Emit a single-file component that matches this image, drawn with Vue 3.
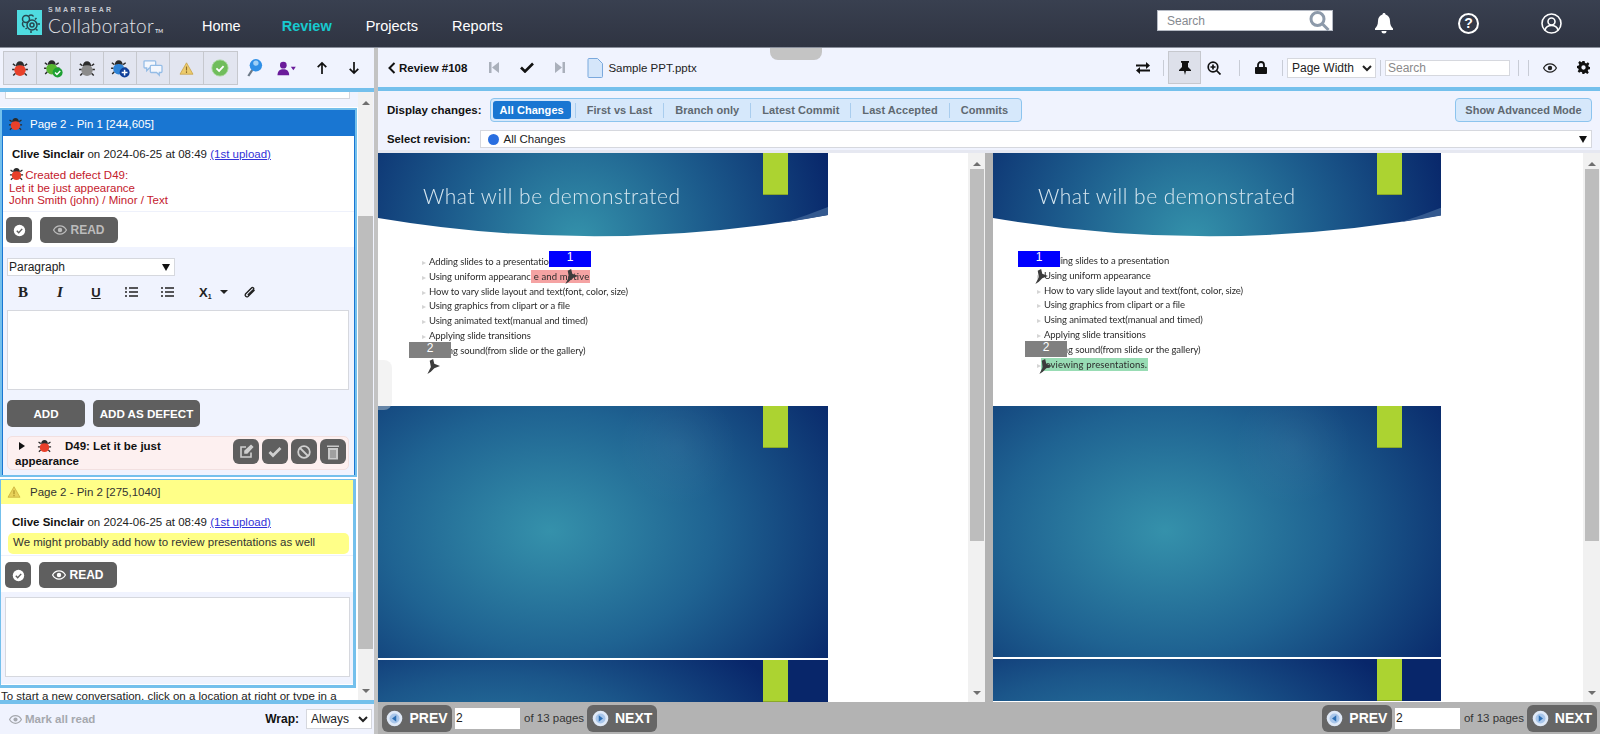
<template>
  <div class="app">
    <!-- shared icons -->
    <svg class="sprite" width="0" height="0">
      <symbol id="bug" viewBox="0 0 24 24">
        <path d="M6 9 2.500 6.500M18 9l3.500-2.500M5 14H1.500M19 14h3.500M6 19l-3 3M18 19l3 3" stroke="#2b2b2b" stroke-width="2" fill="none" />
        <ellipse cx="12" cy="15" rx="7.500" ry="7.500" fill="currentColor" />
        <path d="M6.500 9.500C6.500 5.500 9 3 12 3s5.500 2.500 5.500 6.500c-3.500-1.500-7.500-1.500-11 0Z" fill="#2b2b2b" />
      </symbol>
      <symbol id="eye" viewBox="0 0 24 24">
        <path d="M1 12s4-7 11-7 11 7 11 7-4 7-11 7S1 12 1 12Z" fill="none" stroke="currentColor" stroke-width="2.200" />
        <circle cx="12" cy="12" r="3.800" fill="currentColor" />
      </symbol>
      <symbol id="check-circle" viewBox="0 0 24 24">
        <circle cx="12" cy="12" r="10.500" fill="#fff" />
        <path d="m7 12.500 3.500 3.500L17 9" fill="none" stroke="#5f5f5f" stroke-width="2.600" />
      </symbol>
      <symbol id="page-arrow" viewBox="0 0 24 24">
        <circle cx="12" cy="12" r="11" fill="#dfe9f7" />
        <circle cx="12" cy="12" r="7" fill="#a9c6ea" />
        <path d="M14.500 7.500v9L8.500 12Z" fill="#2c6fb5" />
      </symbol>
    </svg>

    <header class="topbar">
      <div class="logo">
        <div class="logo-mark">
          <svg width="25" height="25" viewBox="0 0 25 25" fill="none" stroke="#27474f" stroke-width="1.500">
            <circle cx="15" cy="15" r="5" />
            <circle cx="15" cy="15" r="2" />
            <circle cx="9" cy="9" r="3.500" />
            <path d="M11.500 6.500c1-2 4-2 5 0M6 12c-1 2-.5 4 1.500 5M18 9.500l1.500-1.500M20.500 14H23M19 19l1.500 1.500M14 20.500V23M10 18l-1.500 1" />
          </svg>
        </div>
        <div class="logo-text">
          <div class="logo-small">SMARTBEAR</div>
          <div class="logo-big">Collaborator<span class="logo-tm">TM</span></div>
        </div>
      </div>
      <nav class="nav">
        <a v-for="item in navItems" :key="item" class="nav-link" :class="{ active: item === 'Review' }">{{ item }}</a>
      </nav>
      <div class="top-right">
        <div class="top-search">
          <span>Search</span>
          <svg width="22" height="22" viewBox="0 0 22 22" fill="none" stroke="#8d9aaa" stroke-width="3">
            <circle cx="9.500" cy="9" r="6.500" />
            <path d="m14.500 14 6 6" />
          </svg>
        </div>
        <svg class="top-bell" width="20" height="22" viewBox="0 0 20 22" fill="#fff">
          <path d="M10 1c-1 0-1.500.7-1.500 1.500C5.500 3.300 4 6 4 9c0 4-1.500 6-3 7.500V18h18v-1.500C17.500 15 16 13 16 9c0-3-1.500-5.700-4.500-6.500C11.500 1.700 11 1 10 1ZM7.500 19a2.500 2.500 0 0 0 5 0Z" />
        </svg>
        <div class="top-help">?</div>
        <svg class="top-user" width="21" height="21" viewBox="0 0 21 21" fill="none" stroke="#fff" stroke-width="1.600">
          <circle cx="10.500" cy="10.500" r="9.500" />
          <circle cx="10.500" cy="8.500" r="3.500" />
          <path d="M4 17c1-3.500 3.500-4.500 6.500-4.500S16 13.500 17 17" />
        </svg>
      </div>
    </header>

    <main class="workspace">
      <!-- left column with conversations -->
      <aside class="side">
        <div class="side-tools">
          <div class="tool-group">
            <button class="tool"><svg width="18" height="18" class="red"><use href="#bug" /></svg></button>
            <button class="tool">
              <svg width="20" height="20" viewBox="0 0 24 24" class="green">
                <use href="#bug" width="21" height="21" />
                <circle cx="17.500" cy="17.500" r="6" fill="#1da033" />
                <path d="m14.500 17.500 2.200 2.200 4-4" fill="none" stroke="#fff" stroke-width="1.800" />
              </svg>
            </button>
            <button class="tool"><svg width="18" height="18" class="grey"><use href="#bug" /></svg></button>
            <button class="tool">
              <svg width="20" height="20" viewBox="0 0 24 24" class="blue">
                <use href="#bug" width="21" height="21" />
                <circle cx="17.500" cy="17.500" r="6" fill="#0f3f9a" />
                <path d="M14 17.500h7M17.500 14v7" stroke="#fff" stroke-width="1.800" />
              </svg>
            </button>
            <button class="tool">
              <svg width="20" height="18" viewBox="0 0 22 20" fill="#f4f7fd" stroke="#94bce6" stroke-width="1.400">
                <path d="M2 2h11a1 1 0 0 1 1 1v6a1 1 0 0 1-1 1H7l-3 3v-3H2a1 1 0 0 1-1-1V3a1 1 0 0 1 1-1Z" />
                <path d="M9 7h11a1 1 0 0 1 1 1v6a1 1 0 0 1-1 1h-2v3l-3-3H9a1 1 0 0 1-1-1V8a1 1 0 0 1 1-1Z" />
              </svg>
            </button>
            <button class="tool">
              <svg width="15" height="13" viewBox="0 0 18 16"><path d="M9 1 17 15H1Z" fill="#eccb6c" stroke="#c9a24a" /><path d="M9 5.500v5M9 11.500v2" stroke="#8d6c2a" stroke-width="1.400" /></svg>
            </button>
            <button class="tool">
              <svg width="18" height="18" viewBox="0 0 20 20"><circle cx="10" cy="10" r="9" fill="#70bd5c" stroke="#a5d69a" /><path d="m6 10.500 3 2.800 5-5.300" fill="none" stroke="#fff" stroke-width="2" /></svg>
            </button>
          </div>
          <svg class="side-icon" width="16" height="20" viewBox="0 0 18 22">
            <path d="m6 13-4.500 7" stroke="#6d7a88" stroke-width="2.500" />
            <circle cx="10" cy="8" r="7" fill="#2f8fe6" />
            <circle cx="10" cy="5.500" r="3" fill="#9fd0f7" />
          </svg>
          <svg class="side-icon icon-user" width="21" height="15" viewBox="0 0 24 18" fill="#6a1b9a">
            <circle cx="7" cy="5" r="4" />
            <path d="M0 17c0-5 3-7 7-7s7 2 7 7Z" />
            <path d="m16 7 6 0-3 4Z" />
          </svg>
          <svg class="side-arrow" width="12" height="14" viewBox="0 0 14 16" fill="none" stroke="#111" stroke-width="2"><path d="M7 15V2M2 7l5-5 5 5" /></svg>
          <svg class="side-arrow" width="12" height="14" viewBox="0 0 14 16" fill="none" stroke="#111" stroke-width="2"><path d="M7 1v13M2 9l5 5 5-5" /></svg>
        </div>
        <div class="stripe"></div>

        <div class="side-body">
          <div class="threads">
            <div class="thread-tail"><div class="tail-box"></div></div>

            <section class="card card-active">
              <div class="card-head head-blue">
                <svg width="15" height="15" class="red"><use href="#bug" /></svg>
                <span>Page 2 - Pin 1 [244,605]</span>
              </div>
              <div class="card-msg">
                <div class="msg-meta"><b>Clive Sinclair</b> on 2024-06-25 at 08:49 <a class="upload">(1st upload)</a></div>
                <div class="msg-defect">
                  <svg width="15" height="15" class="red"><use href="#bug" /></svg>
                  Created defect D49:<br />Let it be just appearance<br />John Smith (john) / Minor / Text
                </div>
              </div>
              <div class="card-actions">
                <button class="btn btn-icon"><svg width="13" height="13"><use href="#check-circle" /></svg></button>
                <button class="btn btn-read is-read"><svg width="14" height="14"><use href="#eye" /></svg>READ</button>
              </div>
              <div class="editor">
                <div class="para-select"><span>Paragraph</span><i class="tri"></i></div>
                <div class="format-bar">
                  <b class="fmt fmt-b">B</b>
                  <i class="fmt fmt-i">I</i>
                  <u class="fmt fmt-u">U</u>
                  <svg class="fmt-svg" width="13" height="12" viewBox="0 0 13 12" stroke="#222" stroke-width="1.500"><path d="M4 2h9M4 6h9M4 10h9M1 1v2.500M1 5v2M1 9v2" /></svg>
                  <svg class="fmt-svg" width="13" height="12" viewBox="0 0 13 12" stroke="#222" stroke-width="1.500"><path d="M4 2h9M4 6h9M4 10h9M0 2h2M0 6h2M0 10h2" /></svg>
                  <span class="fmt-sub">X<sub>1</sub></span>
                  <i class="mini-tri"></i>
                  <svg class="fmt-clip" width="13" height="13" viewBox="0 0 13 13" fill="none" stroke="#222" stroke-width="1.400"><path d="M11.500 4 5 10.500a1.800 1.800 0 0 1-2.500-2.500l6-6a1.200 1.200 0 0 1 2 1.500L4.800 9" /></svg>
                </div>
                <div class="textbox textbox-1"></div>
                <div class="editor-btns">
                  <button class="btn btn-add">ADD</button>
                  <button class="btn btn-defect">ADD AS DEFECT</button>
                </div>
                <div class="defect-row">
                  <div class="defect-text">
                    <i class="expand"></i>
                    <svg width="15" height="15" class="red"><use href="#bug" /></svg>
                    <b class="defect-title">D49: Let it be just appearance</b>
                  </div>
                  <div class="defect-btns">
                    <button class="btn btn-mini">
                      <svg width="15" height="15" viewBox="0 0 15 15" fill="none" stroke="#cfcfcf" stroke-width="1.600"><path d="M12 8.500V13H2V3h5" /><path d="M6 7 12 1.500l1.500 1.500L8 9H6Z" fill="#cfcfcf" /></svg>
                    </button>
                    <button class="btn btn-mini">
                      <svg width="14" height="12" viewBox="0 0 14 12" fill="none" stroke="#cfcfcf" stroke-width="2.800"><path d="m1.500 6 3.500 3.500L12.500 2" /></svg>
                    </button>
                    <button class="btn btn-mini">
                      <svg width="14" height="14" viewBox="0 0 14 14" fill="none" stroke="#cfcfcf" stroke-width="1.800"><circle cx="7" cy="7" r="5.800" /><path d="m3 3 8 8" /></svg>
                    </button>
                    <button class="btn btn-mini">
                      <svg width="14" height="16" viewBox="0 0 14 16" fill="#c9c9c9"><path d="M1 1.500h12V3H1ZM2 4h10v11.500H2Z" /><path d="M5 6v8M7 6v8M9 6v8" stroke="#777" /></svg>
                    </button>
                  </div>
                </div>
              </div>
            </section>

            <section class="card card-open">
              <div class="card-head head-yellow">
                <svg width="14" height="12" viewBox="0 0 18 16"><path d="M9 1 17 15H1Z" fill="#e8d25a" stroke="#c9ad3a" /><path d="M9 5.500v5M9 11.500v2" stroke="#a58a22" stroke-width="1.400" /></svg>
                <span>Page 2 - Pin 2 [275,1040]</span>
              </div>
              <div class="card-msg msg-yellow">
                <div class="msg-meta"><b>Clive Sinclair</b> on 2024-06-25 at 08:49 <a class="upload">(1st upload)</a></div>
                <div class="msg-note">We might probably add how to review presentations as well</div>
              </div>
              <div class="card-actions actions-2">
                <button class="btn btn-icon"><svg width="13" height="13"><use href="#check-circle" /></svg></button>
                <button class="btn btn-read"><svg width="14" height="14"><use href="#eye" /></svg>READ</button>
              </div>
              <div class="editor editor-2">
                <div class="textbox textbox-2"></div>
              </div>
            </section>

            <p class="hint">To start a new conversation, click on a location at right or type in a</p>
          </div>

          <div class="scrollbar scroll-side">
            <i class="arrow-up"></i>
            <div class="thumb-space"><div class="thumb"></div></div>
            <i class="arrow-down"></i>
          </div>
        </div>

        <div class="stripe"></div>
        <div class="side-foot">
          <span class="mark-read"><svg width="13" height="13"><use href="#eye" /></svg>Mark all read</span>
          <label class="wrap-label">Wrap:</label>
          <select class="wrap-select"><option>Always</option></select>
        </div>
      </aside>

      <!-- right column with the diff viewer -->
      <div class="viewer">
        <div class="view-tools">
          <div class="collapse-tab"></div>
          <div class="crumb">
            <svg width="8" height="12" viewBox="0 0 8 12" fill="none" stroke="#111" stroke-width="2"><path d="M6.500 1 1.500 6l5 5" /></svg>
            <b>Review #108</b>
          </div>
          <div class="doc-nav">
            <svg width="10" height="11" viewBox="0 0 10 11" fill="#aab0bb"><path d="M0 0h2.500v11H0ZM10 0v11L3 5.500Z" /></svg>
            <svg width="14" height="11" viewBox="0 0 14 11" fill="none" stroke="#111" stroke-width="2.600"><path d="m1 5.500 4 4L13 1.500" /></svg>
            <svg width="10" height="11" viewBox="0 0 10 11" fill="#aab0bb"><path d="M10 0H7.500v11H10ZM0 0v11l7-5.500Z" /></svg>
          </div>
          <div class="file-name">
            <svg width="16" height="20" viewBox="0 0 16 20" fill="#d5e6fa" stroke="#7ba9dd"><path d="M1 1.500a1 1 0 0 1 1-1h8.500l5 5V18.500a1 1 0 0 1-1 1H2a1 1 0 0 1-1-1Z" /></svg>
            <span>Sample PPT.pptx</span>
          </div>
          <div class="view-right">
            <svg class="vt vt-swap" width="14" height="12" viewBox="0 0 14 12" fill="#111"><path d="M0 2.500h10V0l4 3.500L10 7V4.500H0ZM14 7.500H4V5L0 8.500 4 12V9.500h10Z" /></svg>
            <i class="vsep"></i>
            <div class="pin-btn">
              <svg width="12" height="14" viewBox="0 0 12 14" fill="#111"><path d="M2 0h8v1.500L9 2v4l3 3v1H7l-1 4-1-4H0V9l3-3V2l-1-.5Z" /></svg>
            </div>
            <svg class="vt vt-zoom" width="14" height="14" viewBox="0 0 14 14" fill="none" stroke="#111" stroke-width="1.700"><circle cx="6" cy="6" r="4.800" /><path d="m9.500 9.500 4 4M3.500 6h5M6 3.500v5" /></svg>
            <i class="vsep sep-a"></i>
            <svg class="vt vt-lock" width="12" height="13" viewBox="0 0 12 13" fill="#111"><path d="M1 6h10a1 1 0 0 1 1 1v5a1 1 0 0 1-1 1H1a1 1 0 0 1-1-1V7a1 1 0 0 1 1-1Z" /><path d="M3 6V4a3 3 0 0 1 6 0v2" fill="none" stroke="#111" stroke-width="1.800" /></svg>
            <i class="vsep sep-b"></i>
            <select class="page-select"><option>Page Width</option></select>
            <i class="vsep sep-c"></i>
            <input class="view-search" placeholder="Search" />
            <i class="vsep sep-d"></i>
            <i class="vsep sep-e"></i>
            <svg class="vt vt-eye" width="14" height="14"><use href="#eye" /></svg>
            <svg class="vt vt-gear" width="13" height="13" viewBox="0 0 24 24" fill="#111"><path d="M10 0h4l.7 3.400 2.300 1 3-2 2.800 2.800-2 3 1 2.300L24 11v4l-3.200.7-1 2.300 2 3-2.800 2.800-3-2-2.300 1L14 24h-4l-.7-3.200-2.300-1-3 2L1.200 19l2-3-1-2.300L0 13V9l3.200-.7 1-2.300-2-3L5 .2l3 2 1.300-.5ZM12 8a4 4 0 1 0 0 8 4 4 0 0 0 0-8Z" fill-rule="evenodd" /></svg>
          </div>
        </div>
        <div class="stripe"></div>

        <div class="filters">
          <div class="filter-row">
            <b class="filter-label">Display changes:</b>
            <div class="tabs">
              <span v-for="tab in tabs" :key="tab" class="tab" :class="{ 'tab-on': tab === 'All Changes' }">{{ tab }}</span>
            </div>
            <button class="advanced">Show Advanced Mode</button>
          </div>
          <div class="filter-row row-rev">
            <b class="filter-label label-rev">Select revision:</b>
            <div class="rev-select"><i class="rev-dot"></i><span>All Changes</span><i class="tri"></i></div>
          </div>
        </div>

        <div class="docs">
          <div v-for="pane in panes" :key="pane.id" class="doc-pane" :class="pane.id">
            <div class="doc-scroll">
              <div class="slide slide-first">
                <div class="slide-head">
                  <svg class="head-art" width="450" height="90" viewBox="0 0 450 90">
                    <defs>
                      <radialGradient :id="pane.id + '-grad'" gradientUnits="userSpaceOnUse" cx="200" cy="88" r="265">
                        <stop offset="0" stop-color="#3492ab" />
                        <stop offset="0.5" stop-color="#1c5b8c" />
                        <stop offset="1" stop-color="#08266a" />
                      </radialGradient>
                    </defs>
                    <path d="M0 0H450V62Q225 103 0 65Z" :fill="'url(#' + pane.id + '-grad)'" />
                    <path d="M408 69Q430 62 450 54V62Q430 66 408 69Z" fill="#34598f" />
                  </svg>
                  <div class="slide-title">What will be demonstrated</div>
                  <div class="green-tab"></div>
                </div>
                <ul class="slide-lines">
                  <li v-for="(line, i) in pane.lines" :key="i">
                    {{ line.text }}<mark v-if="line.mark" :class="pane.id + '-mark'">{{ line.mark }}</mark>
                  </li>
                </ul>
              </div>
              <div class="slide slide-blue" :style="{ height: pane.midHeight + 'px' }"><div class="green-tab"></div></div>
              <div class="slide slide-blue slide-last"><div class="green-tab"></div></div>

              <div
                v-for="pin in pane.pins"
                :key="pin.label"
                class="pin-label"
                :class="'pin-' + pin.label"
                :style="{ left: pin.x + 'px', top: pin.y + 'px' }"
              >{{ pin.label }}</div>
              <svg
                v-for="(tack, t) in pane.tacks"
                :key="t"
                class="tack"
                width="16"
                height="15"
                viewBox="0 0 14 13"
                :style="{ left: tack.x + 'px', top: tack.y + 'px' }"
              >
                <path d="M3 13 6 7 5 1.500 8 0l1 4 5 2-5 2-3 3Z" fill="#3c3c3c" />
              </svg>
            </div>
            <div class="scrollbar scroll-doc">
              <i class="arrow-up"></i>
              <div class="thumb-space"><div class="thumb"></div></div>
              <i class="arrow-down"></i>
            </div>
            <div v-if="pane.id === 'pane-left'" class="side-handle"></div>
          </div>
        </div>

        <div class="pager">
          <div v-for="n in 2" :key="n" class="pager-side">
            <button class="page-btn">
              <svg width="17" height="17"><use href="#page-arrow" /></svg>PREV
            </button>
            <input class="page-input" value="2" />
            <span class="page-count">of 13 pages</span>
            <button class="page-btn">
              <svg class="flip" width="17" height="17"><use href="#page-arrow" /></svg>NEXT
            </button>
          </div>
        </div>
      </div>
    </main>
  </div>
</template>

<script setup>
const navItems = ['Home', 'Review', 'Projects', 'Reports']
const tabs = ['All Changes', 'First vs Last', 'Branch only', 'Latest Commit', 'Last Accepted', 'Commits']

const sharedLines = [
  { text: 'How to vary slide layout and text(font, color, size)' },
  { text: 'Using graphics from clipart or a file' },
  { text: 'Using animated text(manual and timed)' },
  { text: 'Applying slide transitions' },
  { text: 'Adding sound(from slide or the gallery)' }
]

const panes = [
  {
    id: 'pane-left',
    midHeight: 252,
    lines: [
      { text: 'Adding slides to a presentation' },
      { text: 'Using uniform appearanc', mark: 'e and motive' },
      ...sharedLines
    ],
    pins: [
      { label: 1, x: 171, y: 98 },
      { label: 2, x: 31, y: 189 }
    ],
    tacks: [
      { x: 184, y: 116 },
      { x: 46, y: 206 }
    ]
  },
  {
    id: 'pane-right',
    midHeight: 251,
    lines: [
      { text: 'Adding slides to a presentation' },
      { text: 'Using uniform appearance' },
      ...sharedLines,
      { text: '', mark: 'reviewing presentations.' }
    ],
    pins: [
      { label: 1, x: 25, y: 98 },
      { label: 2, x: 32, y: 188 }
    ],
    tacks: [
      { x: 39, y: 116 },
      { x: 43, y: 206 }
    ]
  }
]
</script>

<style scoped>
.app {
  width: 100%;
  height: 734px;
  display: flex;
  flex-direction: column;
  overflow: hidden;
  font-family: "Liberation Sans", Arial, sans-serif;
  font-size: 11.500px;
  color: #222;
  background: #f0f3fe;
}

.sprite {
  position: absolute;
}

button {
  font-family: inherit;
  border: 0;
  padding: 0;
}

/* Top bar */
.topbar {
  height: 48px;
  flex: none;
  display: flex;
  align-items: center;
  background: linear-gradient(#394050, #2f3442);
  border-bottom: 1px solid #8a8f9b;
  box-sizing: border-box;
}

.logo {
  width: 144px;
  flex: none;
  display: flex;
  align-items: center;
  margin-left: 17px;
}

.logo-mark {
  width: 25px;
  height: 25px;
  flex: none;
  background: #4fdbe0;
  margin-bottom: 2px;
}

.logo-text {
  margin-left: 6px;
  color: #e4e6ea;
  white-space: nowrap;
}

.logo-small {
  font-size: 7px;
  font-weight: bold;
  letter-spacing: 2.300px;
  line-height: 8px;
  color: #c4c8d0;
}

.logo-big {
  font-family: Lato, sans-serif;
  font-weight: 300;
  font-size: 19px;
  line-height: 20px;
  letter-spacing: 0.400px;
  margin-top: 2px;
}

.logo-tm {
  font-size: 5px;
  font-weight: 700;
  letter-spacing: 0;
  margin-left: 1px;
}

.nav {
  display: flex;
  margin-left: 41px;
  margin-top: 4px;
}

.nav-link {
  font-size: 14.500px;
  color: #fff;
  margin-right: 34px;
}

.nav-link.active {
  color: #17c9cf;
  font-weight: bold;
  margin-left: 7px;
}

.top-right {
  margin-left: auto;
  display: flex;
  align-items: center;
}

.top-search {
  width: 176px;
  height: 21px;
  box-sizing: border-box;
  display: flex;
  align-items: center;
  justify-content: space-between;
  padding: 0 2px 0 9px;
  background: #fff;
  border: 1px solid #b5bac4;
  font-size: 12px;
  color: #85898f;
  margin-bottom: 6px;
}

.top-bell {
  margin-left: 41px;
  margin-bottom: 2px;
}

.top-help {
  width: 17px;
  height: 17px;
  margin-left: 64px;
  border: 2px solid #fff;
  border-radius: 50%;
  color: #fff;
  font-size: 14px;
  font-weight: bold;
  line-height: 17px;
  text-align: center;
}

.top-user {
  margin-left: 62px;
  margin-right: 38px;
}

/* Workspace */
.workspace {
  flex: 1;
  display: flex;
  min-height: 0;
}

.side {
  width: 378px;
  flex: none;
  box-sizing: border-box;
  border-right: 4px solid #c3c3c3;
  display: flex;
  flex-direction: column;
  background: #f0f3fe;
}

.stripe {
  height: 4px;
  flex: none;
  background: #74c0ec;
}

.side-tools {
  height: 40px;
  flex: none;
  display: flex;
  align-items: center;
  padding: 0 3px;
  box-sizing: border-box;
}

.tool-group {
  display: flex;
  border: 1px solid #c6c8ce;
}

.tool {
  width: 33.300px;
  height: 32px;
  display: flex;
  align-items: center;
  justify-content: center;
  background: #e2e5f0;
  border-right: 1px solid #c6c8ce;
}

.tool:last-child {
  border-right: 0;
}

.red { color: #e8402a; }
.green { color: #55b52f; }
.grey { color: #8b8b8b; }
.blue { color: #2e83d6; }

.side-icon {
  margin-left: 9px;
}

.icon-user {
  margin-left: 14px;
}

.side-arrow {
  margin-left: 18px;
}

.side-arrow + .side-arrow {
  margin-left: 20px;
}

.side-body {
  flex: 1;
  min-height: 0;
  display: flex;
}

.threads {
  width: 358px;
  flex: none;
  overflow: hidden;
  background: #fff;
}

.thread-tail {
  height: 15px;
  box-sizing: border-box;
  padding: 0 8px 8px 5px;
  background: #f0f3fe;
}

.tail-box {
  height: 7px;
  background: #fff;
  border: 1px solid #d4d6dc;
  border-top: 0;
  box-sizing: border-box;
}

.card {
  box-sizing: border-box;
  width: 358px;
  background: #fff;
}

.card-active {
  border: 2px solid #1976d2;
  outline: 2px solid #74c0ec;
  outline-offset: -1px;
  width: 355px;
  margin-left: 1px;
  height: 367px;
  margin-top: 2px;
}

.card-open {
  margin-top: 3px;
  width: 356px;
  border: 1px solid #74c0ec;
  border-bottom-width: 3px;
  border-right-width: 3px;
  height: 209px;
}

.card-head {
  display: flex;
  align-items: center;
  gap: 7px;
  padding-left: 5px;
}

.head-blue {
  height: 25px;
  background: #1976d2;
  color: #fff;
}

.head-yellow {
  height: 24px;
  background: #ffff88;
  color: #333;
  gap: 9px;
  padding-left: 6px;
}

.card-msg {
  height: 76px;
  box-sizing: border-box;
  padding: 12px 0 0 9px;
  border-bottom: 1px solid #eef1fb;
}

.msg-meta b {
  color: #111;
}

.upload {
  color: #3232d8;
  text-decoration: underline;
}

.msg-defect {
  margin: 6px 0 0 -3px;
  color: #c4202c;
  line-height: 12.600px;
}

.msg-defect svg {
  vertical-align: -2px;
  margin-right: -2px;
}

.msg-yellow {
  height: 52px;
  padding-left: 11px;
}

.msg-note {
  margin: 5px 4px 0 -4px;
  height: 21px;
  box-sizing: border-box;
  padding: 3px 5px;
  background: #ffff88;
  border-radius: 5px;
  color: #333;
}

.card-actions {
  height: 35px;
  box-sizing: border-box;
  display: flex;
  align-items: flex-start;
  gap: 8px;
  padding: 5px 0 0 3px;
}

.actions-2 {
  height: 36px;
  padding-top: 6px;
  padding-left: 4px;
}

.btn {
  background: #5f5f5f;
  color: #fff;
  border-radius: 5px;
  font-size: 11.600px;
  font-weight: bold;
  white-space: nowrap;
  display: flex;
  align-items: center;
  justify-content: center;
}

.btn-icon {
  width: 26px;
  height: 26px;
}

.btn-read {
  width: 78px;
  height: 26px;
  font-size: 12px;
  gap: 3px;
}

.btn-read.is-read {
  color: #bcbcbc;
}

.editor {
  background: #f0f3fe;
  padding: 11px 4px 0;
  height: 228px;
  box-sizing: border-box;
}

.editor-2 {
  height: 92px;
  padding-top: 5px;
  padding-left: 4px;
}

.para-select {
  width: 168px;
  height: 18px;
  box-sizing: border-box;
  display: flex;
  align-items: center;
  justify-content: space-between;
  padding: 0 4px 0 1px;
  background: #fff;
  border: 1px solid #d6d8de;
  font-size: 12px;
}

.tri {
  border-left: 4.500px solid transparent;
  border-right: 4.500px solid transparent;
  border-top: 7px solid #111;
}

.format-bar {
  height: 16px;
  margin-top: 8px;
  display: flex;
  align-items: center;
  color: #222;
}

.fmt {
  font-family: "Liberation Serif", serif;
  font-weight: bold;
  font-size: 15px;
  width: 12px;
  text-align: center;
}

.fmt-b { margin-left: 10px; }
.fmt-i { margin-left: 25px; }
.fmt-u { margin-left: 24px; font-family: "Liberation Sans", sans-serif; font-size: 13px; }

.fmt-svg {
  margin-left: 23px;
}

.fmt-sub {
  margin-left: 25px;
  font-weight: bold;
  font-size: 13px;
}

.fmt-sub sub {
  font-size: 7px;
  vertical-align: -2px;
}

.mini-tri {
  margin-left: 8px;
  border-left: 4px solid transparent;
  border-right: 4px solid transparent;
  border-top: 4px solid #222;
}

.fmt-clip {
  margin-left: 15px;
}

.textbox {
  box-sizing: border-box;
  background: #fff;
  border: 1px solid #d6d8de;
}

.textbox-1 {
  width: 342px;
  height: 80px;
  margin-top: 10px;
}

.textbox-2 {
  width: 345px;
  height: 80px;
}

.editor-btns {
  display: flex;
  gap: 8px;
  margin-top: 10px;
}

.btn-add {
  width: 78px;
  height: 27px;
}

.btn-defect {
  width: 107px;
  height: 27px;
}

.defect-row {
  width: 342px;
  height: 34px;
  margin-top: 9px;
  box-sizing: border-box;
  display: flex;
  justify-content: space-between;
  background: #fdf0f0;
  border: 1px solid #f2e0e0;
  border-radius: 5px;
}

.defect-text {
  width: 190px;
  padding: 1px 0 0 7px;
  line-height: 15px;
  font-weight: bold;
  color: #111;
}

.expand {
  display: inline-block;
  margin: 0 12px 0 4px;
  border-top: 4px solid transparent;
  border-bottom: 4px solid transparent;
  border-left: 6px solid #111;
}

.defect-text svg {
  vertical-align: -3px;
  margin-right: 13px;
}

.defect-btns {
  display: flex;
  gap: 3px;
  padding: 2px 2px 0 0;
}

.btn-mini {
  width: 26px;
  height: 25px;
  border-radius: 6px;
}

.hint {
  margin: 2px 0 0;
  padding-left: 1px;
  line-height: 13px;
  color: #222;
  background: #fff;
}

.side-foot {
  height: 30px;
  flex: none;
  display: flex;
  align-items: center;
  padding: 0 2px 0 9px;
}

.mark-read {
  display: flex;
  align-items: center;
  gap: 3px;
  color: #a5a8ae;
  font-weight: bold;
}

.wrap-label {
  margin-left: auto;
  font-weight: bold;
  font-size: 12px;
  color: #111;
}

.wrap-select {
  margin-left: 7px;
  width: 66px;
  height: 20px;
  font-family: inherit;
  font-size: 12px;
  background: #fff;
  border: 1px solid #d6d8de;
  color: #222;
}

/* Scrollbars */
.scrollbar {
  display: flex;
  flex-direction: column;
  align-items: center;
  background: #f1f1f1;
  flex: none;
}

.scroll-side {
  width: 15px;
}

.scroll-doc {
  width: 17px;
}

.thumb-space {
  flex: 1;
  width: 100%;
}

.thumb {
  width: 100%;
  background: #bdbdbd;
}

.scroll-side .thumb {
  margin-top: 108px;
  height: 433px;
}

.scroll-doc .thumb {
  margin: 0 auto;
  width: 14px;
  height: 372px;
}

.arrow-up {
  margin: 9px 0 3px;
  border-left: 4px solid transparent;
  border-right: 4px solid transparent;
  border-bottom: 4px solid #6f6f6f;
}

.arrow-down {
  margin: 3px 0 7px;
  border-left: 4px solid transparent;
  border-right: 4px solid transparent;
  border-top: 4px solid #6f6f6f;
}

/* Viewer */
.viewer {
  flex: 1;
  min-width: 0;
  display: flex;
  flex-direction: column;
}

.view-tools {
  height: 39px;
  flex: none;
  display: flex;
  align-items: center;
  position: relative;
}

.collapse-tab {
  position: absolute;
  left: 392px;
  top: 0;
  width: 52px;
  height: 12px;
  background: #c4c4c4;
  border-radius: 0 0 8px 8px;
}

.crumb {
  display: flex;
  align-items: center;
  gap: 3px;
  margin-left: 10px;
}

.crumb b {
  color: #111;
}

.doc-nav {
  display: flex;
  align-items: center;
  margin-left: 22px;
  gap: 21px;
}

.file-name {
  display: flex;
  align-items: center;
  gap: 5px;
  margin-left: 22px;
}

.view-right {
  margin-left: auto;
  display: flex;
  align-items: center;
  padding-right: 10px;
}

.vsep {
  width: 1px;
  height: 16px;
  background: #c8ccd6;
  margin-left: 13px;
}

.sep-a { margin-left: 18px; }
.sep-b { margin-left: 15px; }
.sep-c { margin-left: 4px; }
.sep-d { margin-left: 8px; }
.sep-e { margin-left: 9px; }

.pin-btn {
  width: 33px;
  height: 33px;
  margin: 0 0 0 4px;
  display: flex;
  align-items: center;
  justify-content: center;
  background: #dde0ea;
  border: 1px solid #c6c8ce;
  box-sizing: border-box;
}

.vt-zoom { margin-left: 6px; }
.vt-lock { margin-left: 15px; }
.vt-eye { margin-left: 14px; }
.vt-gear { margin-left: 20px; }

.page-select {
  margin-left: 4px;
  width: 89px;
  height: 20px;
  font-family: inherit;
  font-size: 12px;
  background: #fff;
  border: 1px solid #d6d8de;
  color: #222;
}

.view-search {
  margin-left: 4px;
  width: 125px;
  height: 16px;
  box-sizing: border-box;
  padding: 0 2px;
  font-family: inherit;
  font-size: 12px;
  border: 1px solid #d6d8de;
  background: #fff;
}

.view-search::placeholder {
  color: #8a8a8a;
}

.filters {
  flex: none;
  box-sizing: border-box;
  padding: 7px 8px 0 9px;
  border-bottom: 3px solid #e6e8f1;
  height: 62px;
}

.filter-row {
  display: flex;
  align-items: center;
}

.row-rev {
  margin-top: 8px;
}

.filter-label {
  color: #111;
  letter-spacing: 0;
}

.tabs {
  margin-left: 8px;
  display: flex;
  align-items: center;
  height: 24px;
  box-sizing: border-box;
  padding: 0 2px;
  background: #d6e8fb;
  border: 1px solid #8cc4ee;
  border-radius: 4px;
}

.tab {
  height: 15px;
  line-height: 15px;
  padding: 0 11px;
  font-size: 11px;
  letter-spacing: 0.050px;
  font-weight: bold;
  color: #5f6870;
  border-left: 1px solid #a9cdee;
}

.tab:first-child {
  border-left: 0;
}

.tab-on {
  height: 18px;
  line-height: 18px;
  padding: 0 7px;
  background: #1976d2;
  color: #fff;
  border-radius: 3px;
}

.tab-on + .tab {
  margin-left: 4px;
}

.advanced {
  margin-left: auto;
  width: 137px;
  height: 24px;
  background: #d6e8fb;
  border: 1px solid #8cc4ee;
  border-radius: 4px;
  font-size: 11px;
  font-weight: bold;
  color: #5f6870;
}

.label-rev {
  font-size: 11.300px;
}

.rev-select {
  flex: 1;
  margin-left: 9px;
  height: 18px;
  box-sizing: border-box;
  display: flex;
  align-items: center;
  padding: 0 4px 0 7px;
  background: #fff;
  border: 1px solid #d6d8de;
}

.rev-select .tri {
  margin-left: auto;
}

.rev-dot {
  width: 11px;
  height: 11px;
  border-radius: 50%;
  background: #2a6fe0;
  margin-right: 5px;
}

.docs {
  flex: 1;
  min-height: 0;
  display: flex;
  justify-content: space-between;
  background: #b3b3b3;
}

.doc-pane {
  width: 607px;
  display: flex;
  position: relative;
}

.doc-scroll {
  flex: 1;
  position: relative;
  background: #fff;
  overflow: hidden;
}

.slide {
  width: 450px;
  position: relative;
}

.pane-right .slide {
  width: 448px;
  overflow: hidden;
}

.pane-right .green-tab {
  left: 384px;
}

.slide-first {
  height: 253px;
}

.slide-head {
  height: 87px;
  position: relative;
}

.head-art {
  position: absolute;
  left: 0;
  top: 0;
}

.slide-title {
  position: relative;
  padding: 29px 0 0 45px;
  font-family: Lato, sans-serif;
  font-weight: 300;
  font-size: 21px;
  line-height: 28px;
  letter-spacing: 0.500px;
  color: #d7e7f0;
  filter: blur(0.3px);
}

.green-tab {
  position: absolute;
  left: 385px;
  top: 0;
  width: 25px;
  height: 42px;
  box-sizing: border-box;
  background: #acd331;
  border-bottom: 1px solid #8aa82a;
}

.slide-lines {
  list-style: none;
  margin: 15px 0 0;
  padding: 0 0 0 51px;
  font-family: Lato, sans-serif;
  font-size: 9.500px;
  line-height: 14.800px;
  letter-spacing: -0.100px;
  color: #2c2c2c;
  filter: blur(0.4px);
}

.slide-lines li {
  position: relative;
}

.slide-lines li::before {
  content: "▸";
  position: absolute;
  left: -7px;
  color: #d4d4d4;
  font-size: 8px;
}

.slide-lines mark {
  color: inherit;
}

.pane-left-mark {
  background: #f5a3a3;
  padding: 1px 1px 1px 3px;
  letter-spacing: 0.150px;
}

.pane-right-mark {
  background: #98dcb4;
  padding: 1px 1px 1px 1px;
  margin-left: -3px;
  letter-spacing: 0.150px;
}

.pane-right .slide-lines {
  margin-top: 14px;
}

.slide-blue {
  background:
    radial-gradient(circle 60px at 300px 40px, rgba(255, 255, 255, 0.04), transparent),
    radial-gradient(ellipse 340px 250px at 172px 125px, #3591ab 0%, #1f6392 48%, #0d3472 88%, #08266a 100%);
}

.slide-last {
  height: 42px;
  margin-top: 2px;
  background:
    radial-gradient(ellipse 310px 150px at 120px 90px, #2a7ba2 0%, #1b568a 50%, #08266a 100%);
}

.pin-label {
  position: absolute;
  width: 42px;
  height: 16px;
  color: #fff;
  font-size: 12px;
  line-height: 13px;
  text-align: center;
}

.pin-1 {
  background: #0000ff;
}

.pin-2 {
  background: #808080;
}

.tack {
  position: absolute;
  filter: blur(0.4px);
}

.side-handle {
  position: absolute;
  left: 0;
  top: 207px;
  width: 14px;
  height: 50px;
  background: rgba(225, 225, 225, 0.4);
  border-radius: 0 8px 8px 0;
}

/* Pager */
.pager {
  height: 32px;
  flex: none;
  display: flex;
  justify-content: space-between;
  align-items: center;
  padding: 0 3px 0 4px;
  background: #b3b3b3;
}

.pager-side {
  display: flex;
  align-items: center;
}

.page-btn {
  width: 70px;
  height: 27px;
  display: flex;
  align-items: center;
  justify-content: center;
  gap: 6px;
  background: #666;
  border-radius: 6px;
  color: #fff;
  font-size: 14px;
  font-weight: bold;
}

.flip {
  transform: scaleX(-1);
}

.page-input {
  width: 65px;
  height: 21px;
  box-sizing: border-box;
  margin-left: 3px;
  padding: 0 1px;
  border: 0;
  background: #fff;
  font-family: inherit;
  font-size: 12px;
  color: #222;
}

.page-count {
  margin: 0 3px 0 4px;
  color: #333;
}
</style>

<style>
html, body {
  margin: 0;
  overflow: hidden;
}
</style>
